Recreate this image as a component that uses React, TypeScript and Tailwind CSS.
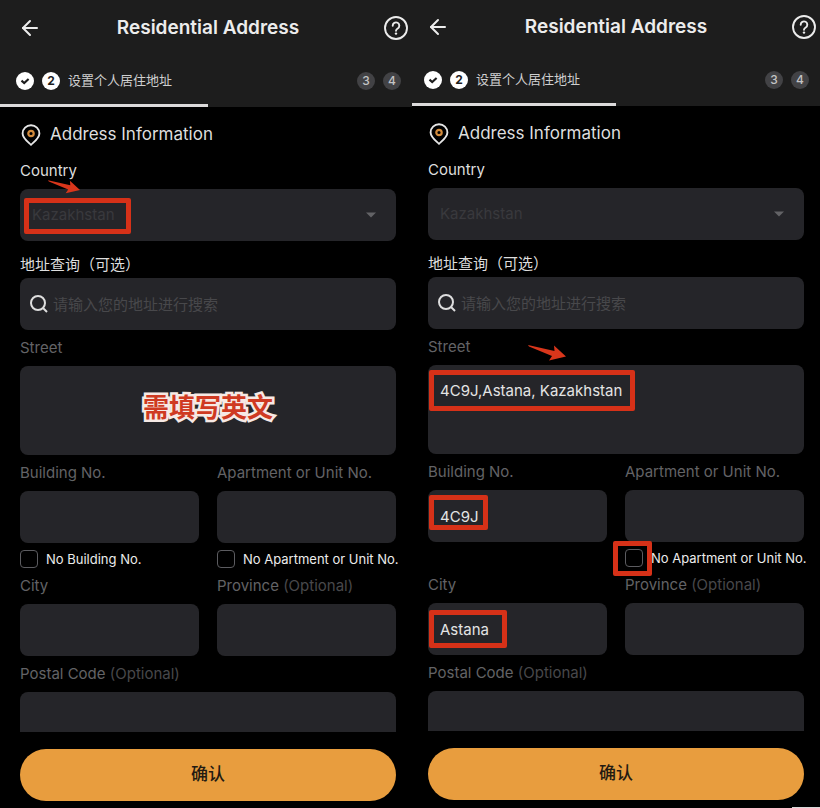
import React from 'react';
import { ArrowLeft } from 'lucide-react';

interface AddressFormProps {
    id: string;
    street?: string;
    building?: string;
    city?: string;
    hasBuilding?: boolean;
    guide: 'country' | 'filled';
}

const fieldClass = 'block w-full h-[52px] rounded-lg bg-[#252529] px-3 text-[15px] leading-5 text-[#e4e4e4] outline-none';
const labelClass = 'block text-[15px] leading-5 text-[#636366]';

const RedBox: React.FC<{ className: string }> = ({ className }) => (
    <span className={`absolute rounded-xs border-[5px] border-[#d63118] pointer-events-none ${className}`}></span>
);

const RedArrow: React.FC<{ className: string }> = ({ className }) => (
    <svg viewBox="0 0 38 16" className={`absolute pointer-events-none ${className}`} fill="#d9361b" aria-hidden="true">
        <path d="M0 0 L26.500 6 L26 0.500 L38 11.500 L21 15.500 L24 11 L1 1.500 Z" />
    </svg>
);

const HelpIcon: React.FC = () => (
    <svg viewBox="0 0 24 24" className="size-6" fill="none" stroke="#ececec" strokeWidth="1.9" strokeLinecap="round">
        <circle cx="12" cy="12" r="11" />
        <path d="M8.700 9.700a3.300 3.300 0 1 1 5 2.800c-1.200.7-1.700 1.200-1.700 2.200" />
        <circle cx="12" cy="17.600" r="1.200" fill="#ececec" stroke="none" />
    </svg>
);

const PinIcon: React.FC = () => (
    <svg viewBox="0 0 20 22" className="w-[22px] h-[22px]" fill="none">
        <path d="M10 20.800C7.800 18.600 1.600 14.200 1.600 9.400a8.400 8.200 0 0 1 16.800 0C18.400 14.200 12.200 18.600 10 20.800Z" stroke="#e6e6e6" strokeWidth="1.900" strokeLinejoin="round" />
        <circle cx="10" cy="9.500" r="2.700" stroke="#d38b3c" strokeWidth="2.200" />
    </svg>
);

const Steps: React.FC = () => (
    <ol className="flex items-center h-[46px] pl-3 pr-[11px] text-xs">
        <li className="flex items-center justify-center size-[18px] rounded-full bg-white">
            <svg viewBox="0 0 18 18" className="size-[18px]" fill="none" stroke="#1d1d1d" strokeWidth="2.1">
                <path d="M5.500 8.600 L8.200 11 L12.600 6.900" />
            </svg>
        </li>
        <li className="flex items-center ml-2">
            <span className="flex items-center justify-center size-[18px] rounded-full bg-white font-bold text-[#1d1d1d]">2</span>
            <span className="ml-2 text-[13px] text-[#cfcfcf]">设置个人居住地址</span>
        </li>
        <li className="flex items-center justify-center size-[18px] ml-auto rounded-full bg-[#424245] text-[#c4c4c4] font-medium">3</li>
        <li className="flex items-center justify-center size-[18px] ml-2 rounded-full bg-[#424245] text-[#c4c4c4] font-medium">4</li>
    </ol>
);

const NoneCheck: React.FC<{ id: string; text: string; boxed?: boolean }> = ({ id, text, boxed }) => (
    <div className="relative flex items-center h-[18px] mt-[7px] gap-2">
        <input id={id} type="checkbox" className="appearance-none shrink-0 size-[18px] rounded-sm border-[1.5px] border-[#5c5c60] checked:bg-[#e89d3e]" />
        <label htmlFor={id} className="whitespace-nowrap text-[13px] leading-[18px] text-[#ececec]">{text}</label>
        {boxed && <RedBox className="-left-3 -top-2 w-[39px] h-[35px]" />}
    </div>
);

const AddressForm: React.FC<AddressFormProps> = ({ id, street, building, city, hasBuilding, guide }) => {
    const first = guide === 'country';

    return (
        <section className="min-w-0">
            <header className={`bg-[#1d1d1d] ${first ? 'pt-px' : ''}`}>
                <div className={first ? 'pl-1' : ''}>
                    <div className="flex items-center justify-between h-[53px] px-1">
                        <button type="button" aria-label="Back" className="w-9 pl-2.5 text-[#ececec]">
                            <ArrowLeft className="size-6" strokeWidth={2} />
                        </button>
                        <h1 className="text-[19px] leading-6 font-semibold text-[#ececec]">Residential Address</h1>
                        <button type="button" aria-label="Help" className="flex justify-end w-9">
                            <HelpIcon />
                        </button>
                    </div>
                    <div className="pt-1">
                        <Steps />
                    </div>
                </div>
                <div className={`h-[3px] bg-[#dcdadb] ${first ? 'w-[calc(50%+2px)]' : 'w-1/2'}`}></div>
            </header>

            <form className={`pr-4 ${first ? 'pl-5' : 'pl-4'}`} onSubmit={(e) => e.preventDefault()}>
                <h2 className="flex items-center h-6 mt-4 gap-2 text-[17px] text-[#dedede]">
                    <PinIcon />
                    Address Information
                </h2>

                <div className="relative mt-3.5">
                    <label htmlFor={`${id}-country`} className="block mb-2 text-[15px] leading-5 text-[#dedede]">Country</label>
                    <select id={`${id}-country`} disabled className={`${fieldClass} appearance-none opacity-100 text-[#39393d]!`}>
                        <option>Kazakhstan</option>
                    </select>
                    <svg viewBox="0 0 10 6" className="absolute right-5 bottom-[23px] w-2.5 h-1.5" fill="#636366">
                        <path d="M0 .5h10L5 5.500Z" />
                    </svg>
                    {first && <RedBox className="left-1 top-[37px] w-[107px] h-9" />}
                    {first && <RedArrow className="left-7 top-[19px] w-8 h-3.5" />}
                </div>

                <label htmlFor={`${id}-search`} className="block mt-3.5 mb-[3px] text-[15px] leading-5 text-[#dedede]">地址查询（可选）</label>
                <div className="relative">
                    <svg viewBox="0 0 18 18" className="absolute left-2.5 top-[17px] size-[18px]" fill="none" stroke="#dedede" strokeWidth="2">
                        <circle cx="8" cy="8" r="7" />
                        <path d="M13 13l4 4" />
                    </svg>
                    <input id={`${id}-search`} type="text" placeholder="请输入您的地址进行搜索" className={`${fieldClass} pl-[33px]! placeholder:text-[#48484b]`} />
                </div>

                <div className="relative mt-2">
                    <label htmlFor={`${id}-street`} className={labelClass}>Street</label>
                    <textarea id={`${id}-street`} defaultValue={street} className={`${fieldClass} mt-2 h-[89px]! py-4 resize-none`} />
                    {first && (
                        <strong className="absolute inset-x-0 top-[52px] text-center text-[26px] leading-9 font-bold text-[#cf3a22] [-webkit-text-stroke:5px_#f6e9e4] [paint-order:stroke_fill] pointer-events-none">
                            需填写英文
                        </strong>
                    )}
                    {!first && <RedArrow className="left-[100px] top-2 w-[38px] h-4" />}
                    {!first && <RedBox className="left-px top-[33px] w-[206px] h-[41px]" />}
                </div>

                <div className="grid grid-cols-2 gap-[18px] mt-2">
                    <div className="relative">
                        <label htmlFor={`${id}-building`} className={labelClass}>Building No.</label>
                        <input id={`${id}-building`} type="text" defaultValue={building} className={`${fieldClass} mt-2`} />
                        {building && <RedBox className="left-px top-[33px] w-[59px] h-[35px]" />}
                        {!hasBuilding && <NoneCheck id={`${id}-no-building`} text="No Building No." />}
                    </div>
                    <div>
                        <label htmlFor={`${id}-unit`} className={`${labelClass} whitespace-nowrap`}>Apartment or Unit No.</label>
                        <input id={`${id}-unit`} type="text" className={`${fieldClass} mt-2`} />
                        <NoneCheck id={`${id}-no-unit`} text="No Apartment or Unit No." boxed={!first} />
                    </div>
                </div>

                <div className="grid grid-cols-2 gap-[18px] mt-2">
                    <div className="relative">
                        <label htmlFor={`${id}-city`} className={labelClass}>City</label>
                        <input id={`${id}-city`} type="text" defaultValue={city} className={`${fieldClass} mt-2`} />
                        {city && <RedBox className="left-px top-[35px] w-[78px] h-[38px]" />}
                    </div>
                    <div>
                        <label htmlFor={`${id}-province`} className={labelClass}>
                            Province <span className="text-[#48484b]">(Optional)</span>
                        </label>
                        <input id={`${id}-province`} type="text" className={`${fieldClass} mt-2`} />
                    </div>
                </div>

                <div className="mt-2">
                    <label htmlFor={`${id}-postal`} className={labelClass}>
                        Postal Code <span className="text-[#48484b]">(Optional)</span>
                    </label>
                    <div className="h-10 mt-2 overflow-hidden">
                        <input id={`${id}-postal`} type="text" className={fieldClass} />
                    </div>
                </div>

                <button type="submit" className="block w-full h-[52px] mt-[17px] mb-1.5 rounded-full bg-[#e89d3e] text-[17px] font-medium text-[#231a12]">
                    确认
                </button>
            </form>
        </section>
    );
};

export default function App() {
    return (
        <main className="relative grid grid-cols-[103fr_102fr] min-h-screen bg-black font-['Inter','Noto_Sans_CJK_SC',sans-serif]">
            <AddressForm id="empty" guide="country" />
            <AddressForm id="filled" guide="filled" street="4C9J,Astana, Kazakhstan" building="4C9J" city="Astana" hasBuilding />
            <span className="absolute right-0 bottom-0 w-7 h-px bg-[#d8d8d8]"></span>
        </main>
    );
}
